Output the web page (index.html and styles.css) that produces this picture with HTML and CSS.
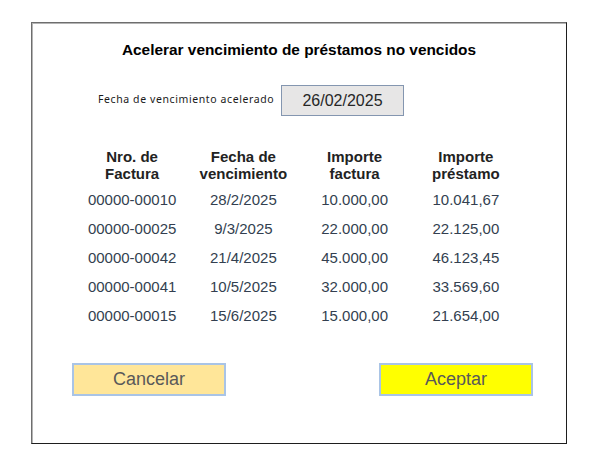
FILE: index.html
```html
<!DOCTYPE html>
<html lang="es">

<head>
    <meta charset="UTF-8">
    <title>Acelerar vencimiento</title>
    <link rel="stylesheet" href="styles.css">
</head>

<body>
    <div class="dialog">
        <h2 class="title">Acelerar vencimiento de préstamos no vencidos</h2>

        <div class="date-row">
            <span class="date-label">Fecha de vencimiento acelerado</span>
            <div class="date-box">26/02/2025</div>
        </div>

        <table class="loans">
            <thead>
                <tr>
                    <th>Nro. de<br>Factura</th>
                    <th>Fecha de<br>vencimiento</th>
                    <th>Importe<br>factura</th>
                    <th>Importe<br>préstamo</th>
                </tr>
            </thead>
            <tbody>
                <tr><td>00000-00010</td><td>28/2/2025</td><td>10.000,00</td><td>10.041,67</td></tr>
                <tr><td>00000-00025</td><td>9/3/2025</td><td>22.000,00</td><td>22.125,00</td></tr>
                <tr><td>00000-00042</td><td>21/4/2025</td><td>45.000,00</td><td>46.123,45</td></tr>
                <tr><td>00000-00041</td><td>10/5/2025</td><td>32.000,00</td><td>33.569,60</td></tr>
                <tr><td>00000-00015</td><td>15/6/2025</td><td>15.000,00</td><td>21.654,00</td></tr>
            </tbody>
        </table>

        <div class="actions">
            <button class="btn btn-cancel">Cancelar</button>
            <button class="btn btn-ok">Aceptar</button>
        </div>
    </div>
</body>

</html>
```

FILE: styles.css
```css
* {
    margin: 0;
    padding: 0;
    box-sizing: border-box;
    font-family: 'Liberation Sans', Arial, sans-serif;
}

body {
    background-color: #ffffff;
    padding: 22px 0 0 31px;
}

.dialog {
    width: 536px;
    height: 422px;
    background-color: #ffffff;
    border: 1px solid #1e1e1e;
    border-top-color: #6e6e6e;
    border-left-color: #6e6e6e;
    box-shadow: inset 1px 1px 0 #b4b4b4;
    display: flex;
    flex-direction: column;
}

.title {
    margin-top: 17px;
    text-align: center;
    font-size: 15.4px;
    line-height: 20px;
    font-weight: bold;
    color: #000000;
}

.date-row {
    display: flex;
    align-items: flex-start;
    gap: 9px;
    margin: 25px 0 0 66px;
}

.date-label {
    padding-top: 7px;
    width: 174px;
    font-family: 'Noto Sans', sans-serif;
    font-size: 10.5px;
    line-height: 14px;
    letter-spacing: 0.6px;
    color: #1a1a1a;
    white-space: nowrap;
}

.date-box {
    width: 123px;
    height: 31px;
    background-color: #e7e6e6;
    border: 1px solid #8496b0;
    font-size: 16px;
    line-height: 29px;
    text-align: center;
    color: #262626;
}

.loans {
    margin: 32px auto 0;
    border-collapse: collapse;
    table-layout: fixed;
    width: 445px;
}

.loans th {
    width: 111.25px;
    font-size: 15px;
    line-height: 17px;
    font-weight: bold;
    color: #222222;
    padding-bottom: 3px;
}

.loans td {
    height: 29px;
    text-align: center;
    font-size: 15px;
    color: #333f50;
}

.actions {
    display: flex;
    justify-content: space-between;
    margin-top: 33px;
    padding: 0 33px 0 40px;
}

.btn {
    width: 154px;
    height: 33px;
    border: 2px solid #a9c4e6;
    font-size: 18px;
    color: #595959;
    cursor: pointer;
}

.btn-cancel {
    background-color: #ffe699;
}

.btn-ok {
    background-color: #ffff00;
}
```
